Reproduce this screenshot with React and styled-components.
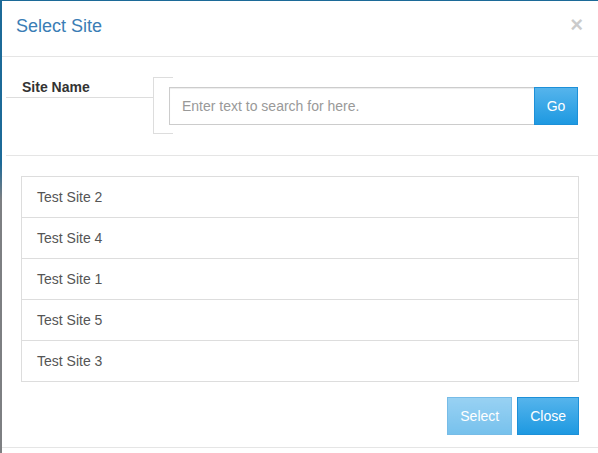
import React from 'react'
import styled, { createGlobalStyle } from 'styled-components'

const sites = ['Test Site 2', 'Test Site 4', 'Test Site 1', 'Test Site 5', 'Test Site 3']

const GlobalStyle = createGlobalStyle`
  html, body {
    margin: 0;
    padding: 0;
    height: 453px;
    overflow: hidden;
    background: linear-gradient(to bottom, #1c6a98 0%, #1c6a98 36%, #7d7f82 44%, #7d7f82 100%);
    font-family: "Liberation Sans", Arial, sans-serif;
    font-size: 14px;
    color: #333;
  }
`

const SelectSiteModal = () => (
  <Page>
    <GlobalStyle />
    <Modal>
      <Header>
        <Title>Select Site</Title>
        <CloseX aria-label="Close">×</CloseX>
      </Header>

      <FilterRow>
        <LabelCol>
          <Label>Site Name</Label>
        </LabelCol>
        <Bracket />
        <InputGroup>
          <SearchInput placeholder="Enter text to search for here." />
          <GoButton>Go</GoButton>
        </InputGroup>
      </FilterRow>

      <List>
        {sites.map(site => (
          <Item key={site}>{site}</Item>
        ))}
      </List>

      <Footer>
        <Button disabled>Select</Button>
        <Button>Close</Button>
      </Footer>
    </Modal>
  </Page>
)

const Page = styled.div`
  padding: 1px 0 0 2px;
`

const Modal = styled.div`
  background: #fff;
  height: 452px;
  display: flex;
  flex-direction: column;
`

const Header = styled.div`
  height: 56px;
  box-sizing: border-box;
  padding: 15px 15px 0 14px;
  border-bottom: 1px solid #e5e5e5;
  display: flex;
  justify-content: space-between;
  align-items: flex-start;
`

const Title = styled.div`
  font-size: 18px;
  line-height: 20px;
  color: #3a7db5;
`

const CloseX = styled.span`
  font-size: 22px;
  font-weight: 700;
  line-height: 18px;
  color: #000;
  opacity: 0.2;
`

const FilterRow = styled.div`
  display: flex;
  align-items: flex-start;
  margin-left: 4px;
  padding-top: 20px;
  height: 78px;
  border-bottom: 1px solid #e5e5e5;
`

const LabelCol = styled.div`
  width: 147px;
  flex-shrink: 0;
  border-bottom: 1px solid #ddd;
`

const Label = styled.div`
  font-weight: 700;
  line-height: 20px;
  padding-left: 16px;
  color: #333;
`

const Bracket = styled.div`
  width: 20px;
  height: 57px;
  box-sizing: border-box;
  flex-shrink: 0;
  border: 1px solid #ddd;
  border-right: none;
`

const InputGroup = styled.div`
  flex: 1;
  display: flex;
  margin: 10px 20px 0 -4px;
  position: relative;
`

const SearchInput = styled.input`
  flex: 1;
  min-width: 0;
  height: 38px;
  box-sizing: border-box;
  padding: 8px 12px;
  border: 1px solid #ccc;
  border-right: none;
  font-family: "Liberation Sans", Arial, sans-serif;
  font-size: 14px;
  line-height: 20px;
  color: #555;
  outline: none;
  box-shadow: inset 0 1px 1px rgba(0, 0, 0, 0.075);
  &::placeholder {
    color: #999;
  }
`

const BlueButton = styled.button`
  height: 38px;
  box-sizing: border-box;
  padding: 8px 12px;
  border: 1px solid #1d90d8;
  background: linear-gradient(to bottom, #55b4ec 0%, #1e99e1 100%);
  color: #fff;
  font-family: "Liberation Sans", Arial, sans-serif;
  font-size: 14px;
  line-height: 20px;
  cursor: pointer;
`

const GoButton = styled(BlueButton)`
  width: 44px;
  padding: 8px 0;
`

const List = styled.div`
  margin: 20px 19px 0 19px;
  display: flex;
  flex-direction: column;
`

const Item = styled.div`
  padding: 10px 15px;
  line-height: 20px;
  border: 1px solid #ddd;
  margin-bottom: -1px;
  color: #555;
`

const Footer = styled.div`
  display: flex;
  justify-content: flex-end;
  gap: 5px;
  padding: 16px 19px 12px 0;
  border-bottom: 1px solid #e5e5e5;
`

const Button = styled(BlueButton)`
  &:disabled {
    opacity: 0.6;
    cursor: default;
  }
`

export default SelectSiteModal
